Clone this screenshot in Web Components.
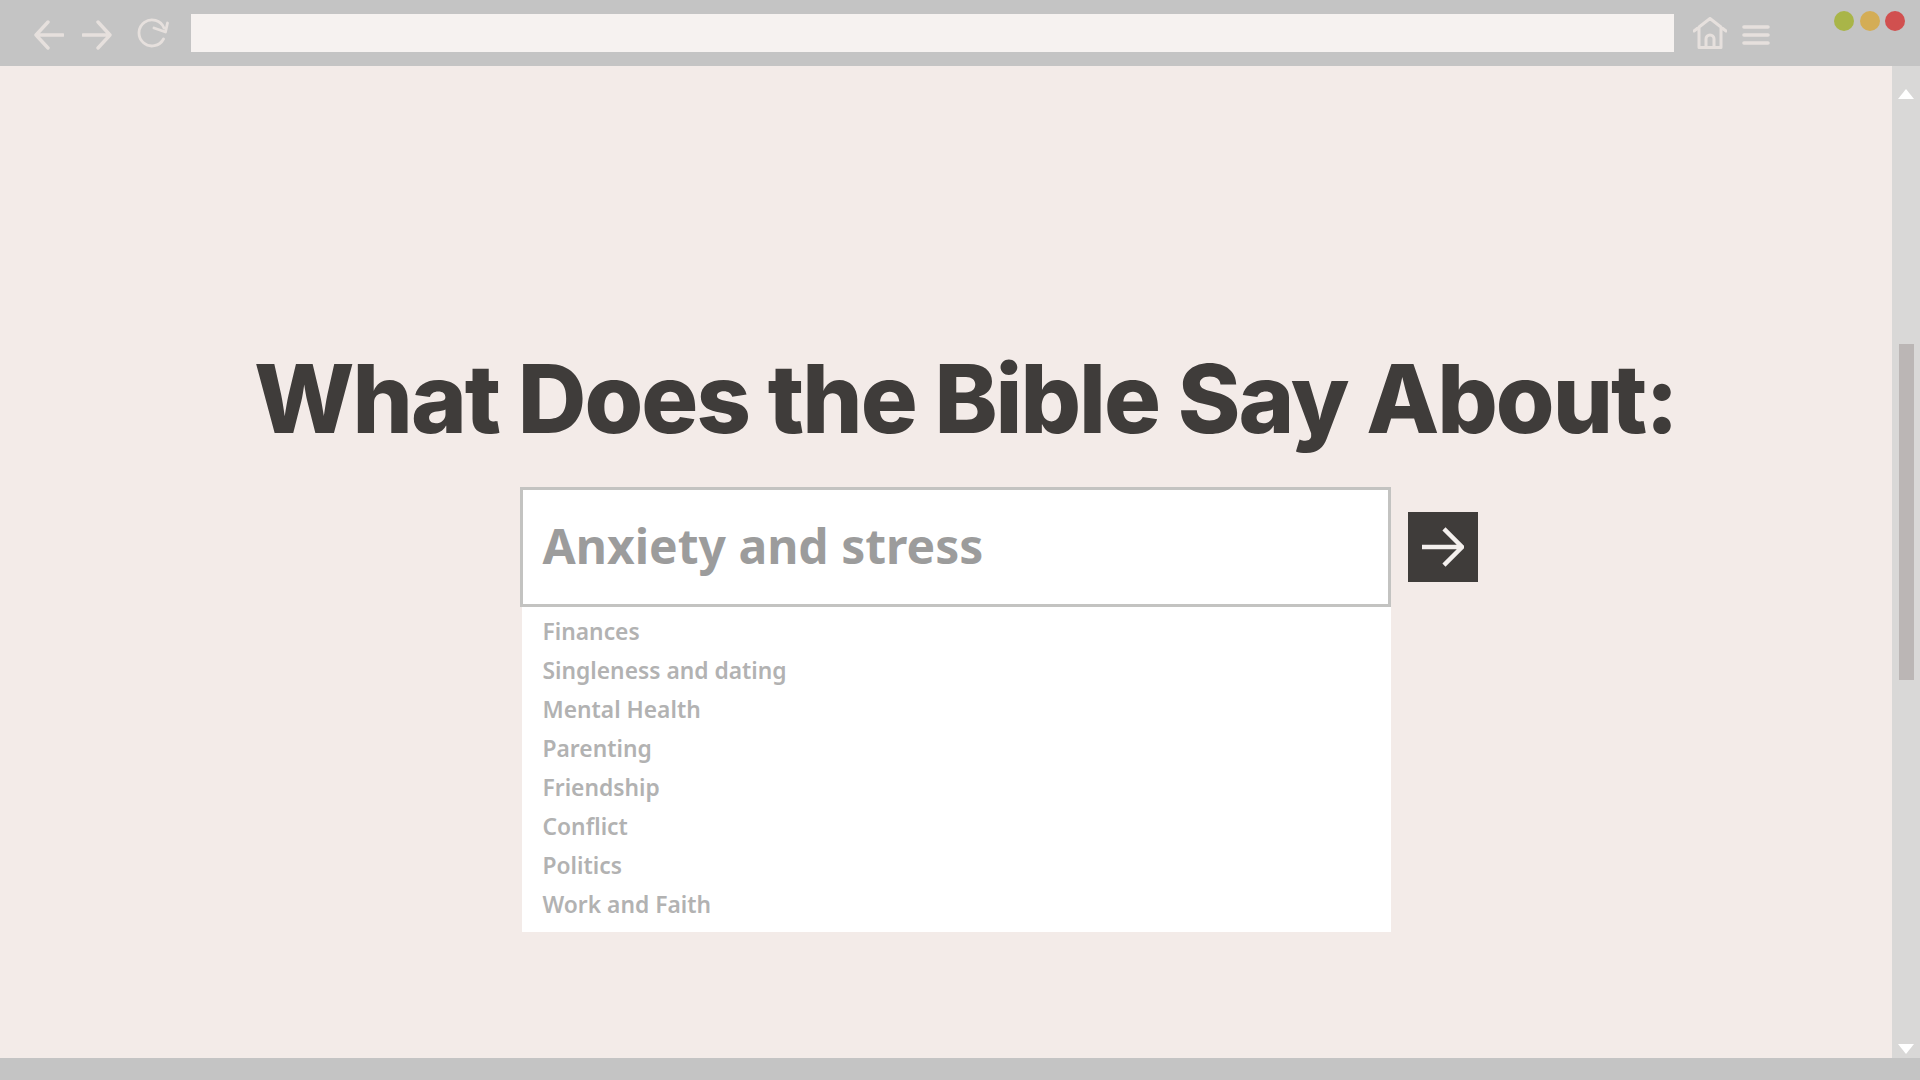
<!DOCTYPE html>
<html lang="en">
<head>
<meta charset="utf-8">
<title>What Does the Bible Say About</title>
<style>
    html, body { margin: 0; padding: 0; background: #f3ebe8; }
</style>
</head>
<body>
<browser-window>
    <nav-toolbar slot="toolbar"></nav-toolbar>
    <page-title>What Does the Bible Say About:</page-title>
    <topic-search value="Anxiety and stress">
        <topic-item>Finances</topic-item>
        <topic-item>Singleness and dating</topic-item>
        <topic-item>Mental Health</topic-item>
        <topic-item>Parenting</topic-item>
        <topic-item>Friendship</topic-item>
        <topic-item>Conflict</topic-item>
        <topic-item>Politics</topic-item>
        <topic-item>Work and Faith</topic-item>
    </topic-search>
</browser-window>

<script>
class BrowserWindow extends HTMLElement {
    constructor() {
        super();
        this.attachShadow({ mode: "open" });
        this.shadowRoot.innerHTML = `
        <style>
            :host {
                display: flex;
                flex-direction: column;
                width: 1920px;
                height: 1080px;
                overflow: hidden;
                background: #f3ebe8;
            }
            .middle {
                flex: 1;
                display: flex;
                min-height: 0;
            }
            .content {
                flex: 1;
                display: flex;
                flex-direction: column;
                padding-top: 285px;
            }
            .bottom {
                height: 22px;
                background: #c4c4c4;
            }
        </style>
        <slot name="toolbar"></slot>
        <div class="middle">
            <div class="content"><slot></slot></div>
            <scroll-rail></scroll-rail>
        </div>
        <div class="bottom"></div>
        `;
    }
}

class NavToolbar extends HTMLElement {
    constructor() {
        super();
        this.attachShadow({ mode: "open" });
        this.shadowRoot.innerHTML = `
        <style>
            :host {
                display: flex;
                align-items: center;
                height: 66px;
                flex: none;
                padding-left: 34px;
                box-sizing: border-box;
                background: #c4c4c4;
            }
            svg {
                display: block;
                flex: none;
                fill: none;
                stroke: #e6e0dd;
                stroke-linecap: round;
                stroke-linejoin: round;
                filter: blur(.4px);
            }
            .arrow { width: 30px; height: 30px; margin-top: 3px; stroke-width: 3.4; }
            .forward { margin-left: 18px; }
            .reload { width: 32px; height: 30px; margin-left: 25px; stroke-width: 2.8; margin-top: 0; }
            .address {
                width: 1483px;
                height: 38px;
                margin-left: 22px;
                background: #f6f2f0;
            }
            .home { width: 34px; height: 32px; margin-left: 19px; stroke-width: 3; }
            .menu { width: 28px; height: 22px; margin-left: 15px; margin-top: 3px; stroke-width: 3.6; }
            .dots {
                display: flex;
                gap: 5.500px;
                margin-left: 64px;
                margin-bottom: 24px;
            }
            .dots i {
                display: block;
                width: 20px;
                height: 20px;
                border-radius: 50%;
            }
        </style>
        <svg class="arrow" viewBox="0 0 30 30"><path d="M29 15H2M14 2 2 15l12 13"/></svg>
        <svg class="arrow forward" viewBox="0 0 30 30"><path d="M1 15h27M16 2l12 13-12 13"/></svg>
        <svg class="reload" viewBox="0 0 32 30"><path d="M27 10A13 13 0 1 0 26.500 21M17 10l11.500 4L30.500 5"/></svg>
        <div class="address"></div>
        <svg class="home" viewBox="0 0 34 32"><path d="M1 14 17 1.500 33 14M6 10v20.500h22V10M13 30.500V22a4 4 0 0 1 8 0v8.500"/></svg>
        <svg class="menu" viewBox="0 0 28 22"><path d="M2 3h24M2 11h24M2 19h24"/></svg>
        <div class="dots">
            <i style="background:#a9b548"></i>
            <i style="background:#d4ad55"></i>
            <i style="background:#d1504f"></i>
        </div>
        `;
    }
}

class ScrollRail extends HTMLElement {
    constructor() {
        super();
        this.attachShadow({ mode: "open" });
        this.shadowRoot.innerHTML = `
        <style>
            :host {
                display: flex;
                flex-direction: column;
                align-items: center;
                width: 28px;
                flex: none;
                background: #d9d8d7;
            }
            .up, .down {
                width: 0;
                height: 0;
                border-left: 8.500px solid transparent;
                border-right: 8.500px solid transparent;
                flex: none;
            }
            .up { border-bottom: 10px solid #fff; margin-top: 23px; }
            .down { border-top: 10px solid #fff; margin-bottom: 4px; }
            .track { flex: 1; width: 100%; display: flex; justify-content: center; }
            .thumb {
                width: 15px;
                height: 336px;
                margin-top: 245px;
                background: #bbb6b5;
            }
        </style>
        <div class="up"></div>
        <div class="track"><div class="thumb"></div></div>
        <div class="down"></div>
        `;
    }
}

class PageTitle extends HTMLElement {
    constructor() {
        super();
        this.attachShadow({ mode: "open" });
        this.shadowRoot.innerHTML = `
        <style>
            :host {
                display: block;
                padding-left: 254px;
                font: 850 95px/1 Inter, "Liberation Sans", sans-serif;
                letter-spacing: -2px;
                white-space: nowrap;
                color: #3f3c3a;
                filter: blur(.6px);
            }
        </style>
        <slot></slot>
        `;
    }
}

class TopicSearch extends HTMLElement {
    constructor() {
        super();
        this.attachShadow({ mode: "open" });
        this.shadowRoot.innerHTML = `
        <style>
            :host {
                display: grid;
                grid-template-columns: 871px 70px;
                column-gap: 17px;
                align-items: center;
                margin: 41px 0 0 520px;
                width: max-content;
            }
            .box {
                box-sizing: border-box;
                height: 120px;
                padding: 0 0 4px 19.500px;
                display: flex;
                align-items: center;
                background: #fff;
                border: 3.500px solid #c3c3c1;
                font: 700 48px "Noto Sans", sans-serif;
                color: #9c9c9c;
                white-space: nowrap;
            }
            button {
                display: block;
                width: 70px;
                height: 70px;
                padding: 0;
                border: 0;
                background: #3f3c3a;
            }
            svg {
                display: block;
                width: 42px;
                height: 42px;
                margin: auto;
                fill: none;
                stroke: #f4f0ee;
                stroke-width: 4.600;
            }
            .list {
                margin-left: 2px;
                padding: 5px 0 8px 20.500px;
                background: #fff;
            }
        </style>
        <div class="box"></div>
        <button aria-label="Search"><svg viewBox="0 0 44 42"><path d="M0 21h42M23 2l19 19-19 19"/></svg></button>
        <div class="list"><slot></slot></div>
        `;
        this.box = this.shadowRoot.querySelector(".box");
    }

    connectedCallback() {
        this.box.textContent = this.getAttribute("value");
    }
}

class TopicItem extends HTMLElement {
    constructor() {
        super();
        this.attachShadow({ mode: "open" });
        this.shadowRoot.innerHTML = `
        <style>
            :host {
                display: block;
                height: 39px;
                font: 600 22.800px/39px "Noto Sans", sans-serif;
                color: #b2b2b2;
            }
        </style>
        <slot></slot>
        `;
    }
}

customElements.define("browser-window", BrowserWindow);
customElements.define("nav-toolbar", NavToolbar);
customElements.define("scroll-rail", ScrollRail);
customElements.define("page-title", PageTitle);
customElements.define("topic-search", TopicSearch);
customElements.define("topic-item", TopicItem);
</script>
</body>
</html>
